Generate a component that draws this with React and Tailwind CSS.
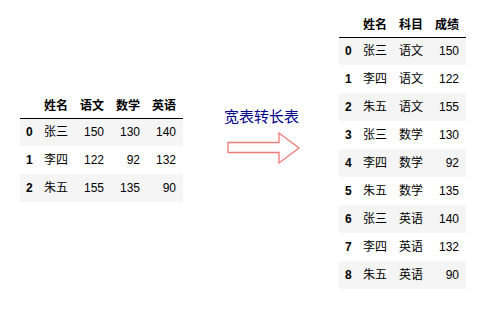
import React from 'react'

const wide = [
    { i: 0, name: '张三', yw: 150, sx: 130, yy: 140 },
    { i: 1, name: '李四', yw: 122, sx: 92, yy: 132 },
    { i: 2, name: '朱五', yw: 155, sx: 135, yy: 90 },
]

const long = [
    ['张三', '语文', 150],
    ['李四', '语文', 122],
    ['朱五', '语文', 155],
    ['张三', '数学', 130],
    ['李四', '数学', 92],
    ['朱五', '数学', 135],
    ['张三', '英语', 140],
    ['李四', '英语', 132],
    ['朱五', '英语', 90],
]

const font = { fontFamily: '"Liberation Sans", "Noto Sans CJK SC", sans-serif' }

function App() {
    return (
    <div className="w-[480px] h-[310px] bg-white flex text-[12px] text-black" style={font}>
        {/* wide table */}
        <div className="pl-[20px] pt-[94px]">
            <table className="border-collapse">
                <thead>
                    <tr className="h-[24px] border-b border-black">
                        <th className="w-[18px]" />
                        <th className="w-[36px] px-[6px] text-right font-bold">姓名</th>
                        <th className="w-[36px] px-[6px] text-right font-bold">语文</th>
                        <th className="w-[36px] px-[6px] text-right font-bold">数学</th>
                        <th className="w-[37px] pl-[6px] pr-[7px] text-right font-bold">英语</th>
                    </tr>
                </thead>
                <tbody>
                    {wide.map((r) => (
                        <tr key={r.i} className={`h-[28px] ${r.i % 2 === 0 ? 'bg-[#f5f5f5]' : 'bg-white'}`}>
                            <td className="pl-[6px] text-left font-bold">{r.i}</td>
                            <td className="px-[6px] text-right">{r.name}</td>
                            <td className="px-[6px] text-right">{r.yw}</td>
                            <td className="px-[6px] text-right">{r.sx}</td>
                            <td className="pl-[6px] pr-[7px] text-right">{r.yy}</td>
                        </tr>
                    ))}
                </tbody>
            </table>
        </div>

        {/* label + arrow */}
        <div className="ml-[41px] pt-[108px] w-[77px] flex flex-col">
            <div className="text-[15px] leading-[16px] text-[#00008b]" style={{ fontFamily: '"Noto Sans CJK SC", sans-serif' }}>宽表转长表</div>
            <svg width="74" height="34" viewBox="0 0 74 34" className="mt-[8px] ml-[3px]">
                <polygon
                    points="1,10.5 52,10.5 52,1 72,16 52,31 52,20.5 1,20.5"
                    fill="white"
                    stroke="#ee7b78"
                    strokeWidth="1.3"
                />
            </svg>
        </div>

        {/* long table */}
        <div className="ml-[38px] pt-[13px]">
            <table className="border-collapse">
                <thead>
                    <tr className="h-[24px] border-b border-black">
                        <th className="w-[18px]" />
                        <th className="w-[36px] px-[6px] text-right font-bold">姓名</th>
                        <th className="w-[36px] px-[6px] text-right font-bold">科目</th>
                        <th className="w-[37px] pl-[6px] pr-[7px] text-right font-bold">成绩</th>
                    </tr>
                </thead>
                <tbody>
                    {long.map((r, i) => (
                        <tr key={i} className={`h-[28px] ${i % 2 === 0 ? 'bg-[#f5f5f5]' : 'bg-white'}`}>
                            <td className="pl-[6px] text-left font-bold">{i}</td>
                            <td className="px-[6px] text-right">{r[0]}</td>
                            <td className="px-[6px] text-right">{r[1]}</td>
                            <td className="pl-[6px] pr-[7px] text-right">{r[2]}</td>
                        </tr>
                    ))}
                </tbody>
            </table>
        </div>
    </div>
    )
}

export default App
